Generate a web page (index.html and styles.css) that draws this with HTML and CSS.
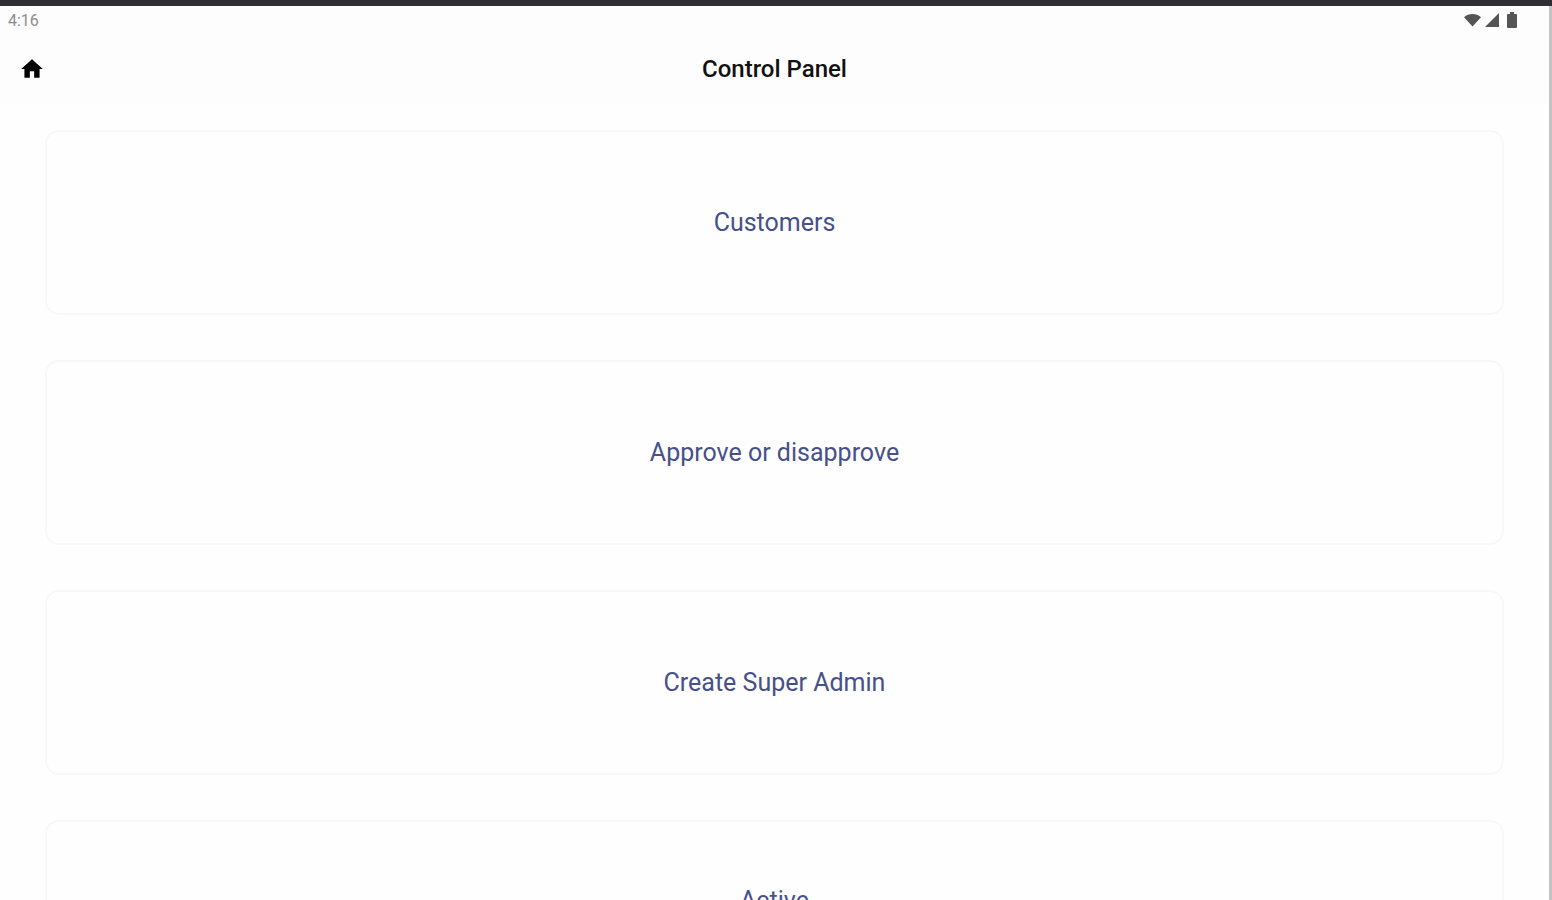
FILE: index.html
```
<!DOCTYPE html>
<html lang="en">
<head>
  <meta charset="UTF-8" />
  <meta name="viewport" content="width=device-width, initial-scale=1.0">
  <title>Control Panel</title>
  <link rel="stylesheet" href="styles.css">
</head>
<body>
  <div class="window-bar"></div>
  <div class="screen">
    <div class="status-bar">
      <span class="time">4:16</span>
      <div class="status-icons">
        <svg class="wifi" width="17" height="14" viewBox="0 0 18 14">
          <path d="M0 4C5 -0.3 13 -0.3 18 4L9 14Z" />
        </svg>
        <svg class="signal" width="14" height="14" viewBox="0 0 14 14">
          <path d="M0 14L14 0V14Z" />
        </svg>
        <svg class="battery" width="10" height="16" viewBox="0 0 10 16">
          <path d="M3 0H7V2H9Q10 2 10 3V15Q10 16 9 16H1Q0 16 0 15V3Q0 2 1 2H3Z" />
        </svg>
      </div>
    </div>

    <header class="app-bar">
      <a class="home" href="#" aria-label="Home">
        <svg width="26" height="26" viewBox="0 0 24 24">
          <path d="M10 20v-6h4v6h5v-8h3L12 3 2 12h3v8z" />
        </svg>
      </a>
      <h1>Control Panel</h1>
    </header>

    <main class="menu">
      <button class="card" type="button">Customers</button>
      <button class="card" type="button">Approve or disapprove</button>
      <button class="card" type="button">Create Super Admin</button>
      <button class="card card-short" type="button">Active</button>
    </main>
  </div>
</body>
</html>
```
FILE: styles.css
```
* {
  box-sizing: border-box;
}
body {
  display: flex;
  flex-direction: column;
  height: 100vh;
  margin: 0;
  overflow: hidden;
  font-family: Roboto, sans-serif;
  background: #fefefe;
}
.window-bar {
  flex-shrink: 0;
  height: 6px;
  background: #312f36;
}
.screen {
  display: flex;
  flex: 1;
  flex-direction: column;
  min-height: 0;
  border-right: 3px solid #c4c4c4;
}
.status-bar {
  display: flex;
  flex-shrink: 0;
  justify-content: space-between;
  align-items: center;
  height: 28px;
  padding: 0 32px 0 8px;
  background: #fdfdfd;
}
.time {
  font-size: 16px;
  color: #8c8c8c;
}
.status-icons {
  display: flex;
  align-items: center;
  gap: 4px;
  fill: #555;
}
.battery {
  margin-left: 4px;
}
.app-bar {
  display: grid;
  flex-shrink: 0;
  grid-template-columns: 32px 1fr 32px;
  align-items: center;
  height: 70px;
  padding: 0 16px;
  background: #fdfdfd;
}
.home {
  display: flex;
  justify-content: center;
  fill: #000;
}
h1 {
  margin: 0;
  font-size: 24px;
  font-weight: 500;
  text-align: center;
  color: #111;
}
.menu {
  display: flex;
  flex-direction: column;
  gap: 45px;
  padding: 26px 45px;
}
.card {
  flex-shrink: 0;
  width: 100%;
  height: 185px;
  padding: 0;
  border: 2px solid #f8f8f8;
  border-radius: 14px;
  background: #fefefe;
  font-family: inherit;
  font-size: 25px;
  color: #47508a;
  cursor: pointer;
}
.card-short {
  height: 160px;
}
```
